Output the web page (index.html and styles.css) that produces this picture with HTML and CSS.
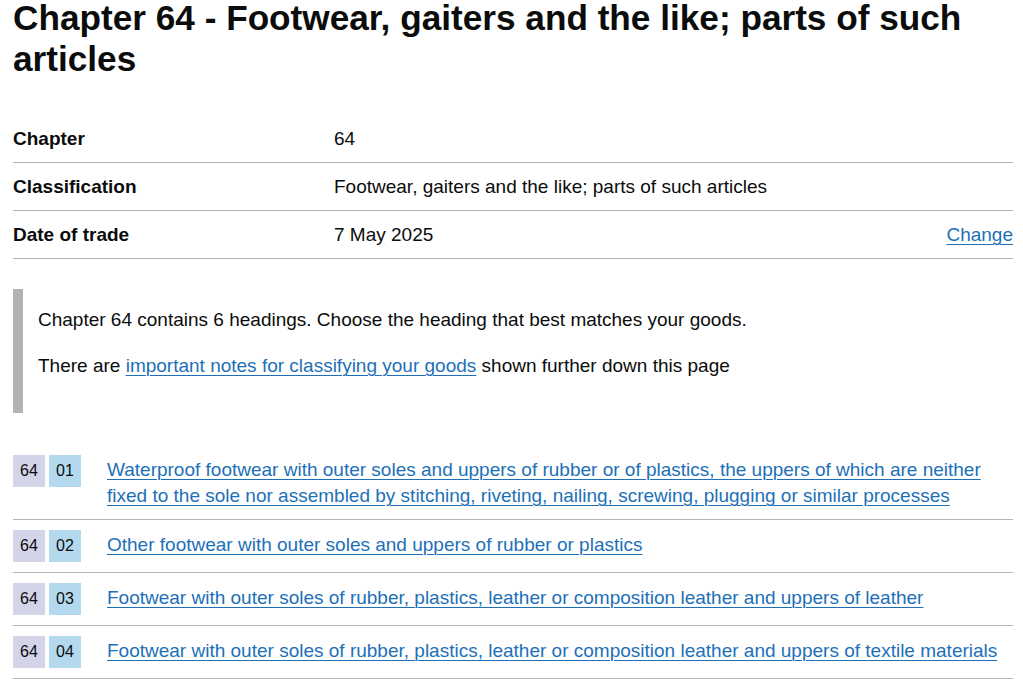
FILE: index.html
```html
<!DOCTYPE html>
<html lang="en">
<head>
  <meta charset="UTF-8">
  <meta name="viewport" content="width=device-width, initial-scale=1.0">
  <title>Chapter 64 - Footwear, gaiters and the like; parts of such articles</title>
  <link rel="stylesheet" href="styles.css">
</head>
<body>
  <main class="page">
    <h1 class="page-title">Chapter 64 - Footwear, gaiters and the like; parts of such articles</h1>

    <!-- Ringkasan bab -->
    <dl class="summary">
      <div class="summary-row">
        <dt class="summary-key">Chapter</dt>
        <dd class="summary-value">64</dd>
        <dd class="summary-actions"></dd>
      </div>
      <div class="summary-row">
        <dt class="summary-key">Classification</dt>
        <dd class="summary-value">Footwear, gaiters and the like; parts of such articles</dd>
        <dd class="summary-actions"></dd>
      </div>
      <div class="summary-row">
        <dt class="summary-key">Date of trade</dt>
        <dd class="summary-value">7 May 2025</dd>
        <dd class="summary-actions"><a href="#" class="link">Change</a></dd>
      </div>
    </dl>

    <div class="inset">
      <p>Chapter 64 contains 6 headings. Choose the heading that best matches your goods.</p>
      <p>There are <a href="#" class="link">important notes for classifying your goods</a> shown further down this page</p>
    </div>

    <!-- Daftar heading -->
    <ul class="headings">
      <li class="heading-row">
        <span class="code code-chapter">64</span>
        <span class="code code-heading">01</span>
        <a href="#" class="link heading-link">Waterproof footwear with outer soles and uppers of rubber or of plastics, the uppers of which are neither fixed to the sole nor assembled by stitching, riveting, nailing, screwing, plugging or similar processes</a>
      </li>
      <li class="heading-row">
        <span class="code code-chapter">64</span>
        <span class="code code-heading">02</span>
        <a href="#" class="link heading-link">Other footwear with outer soles and uppers of rubber or plastics</a>
      </li>
      <li class="heading-row">
        <span class="code code-chapter">64</span>
        <span class="code code-heading">03</span>
        <a href="#" class="link heading-link">Footwear with outer soles of rubber, plastics, leather or composition leather and uppers of leather</a>
      </li>
      <li class="heading-row">
        <span class="code code-chapter">64</span>
        <span class="code code-heading">04</span>
        <a href="#" class="link heading-link">Footwear with outer soles of rubber, plastics, leather or composition leather and uppers of textile materials</a>
      </li>
    </ul>
  </main>
</body>
</html>
```

FILE: styles.css
```css
/* Dasar halaman */
body {
  margin: 0;
  font-family: "Liberation Sans", Arial, sans-serif;
  font-size: 19px;
  line-height: 25px;
  color: #0b0c0c;
  background-color: #ffffff;
}
.page {
  width: 1000px;
  margin-left: 13px;
}
.page-title {
  margin: -3px 0 36px;
  font-size: 35.2px;
  line-height: 41px;
  font-weight: 700;
}
.link {
  color: #1d70b8;
  text-decoration: underline;
  text-decoration-thickness: 1px;
  text-underline-offset: 3px;
}

/* Daftar ringkasan */
.summary {
  margin: 0 0 30px;
}
.summary-row {
  display: grid;
  grid-template-columns: 321px 1fr auto;
  border-bottom: 1px solid #b1b4b6;
}
.summary-key,
.summary-value,
.summary-actions {
  margin: 0;
  padding: 11px 0;
}
.summary-key {
  font-weight: 700;
}
.summary-actions {
  text-align: right;
}

/* Teks sisipan */
.inset {
  border-left: 10px solid #b1b4b6;
  padding: 18px 15px 15px;
  margin-bottom: 32px;
}
.inset p {
  margin: 0 0 21px;
}
.inset p:last-child {
  margin-bottom: 20px;
}

/* Daftar heading */
.headings {
  list-style: none;
  margin: 0;
  padding: 0;
}
.heading-row {
  display: flex;
  align-items: flex-start;
  padding: 10px 0;
  border-bottom: 1px solid #b1b4b6;
}
.code {
  flex: none;
  width: 32px;
  height: 32px;
  line-height: 32px;
  text-align: center;
  font-size: 16px;
}
.code-chapter {
  background-color: #d4d4e8;
  margin-right: 4px;
}
.code-heading {
  background-color: #b4d9ef;
}
.heading-link {
  flex: 1;
  margin: 2px 0 0 26px;
  line-height: 26px;
}
```
